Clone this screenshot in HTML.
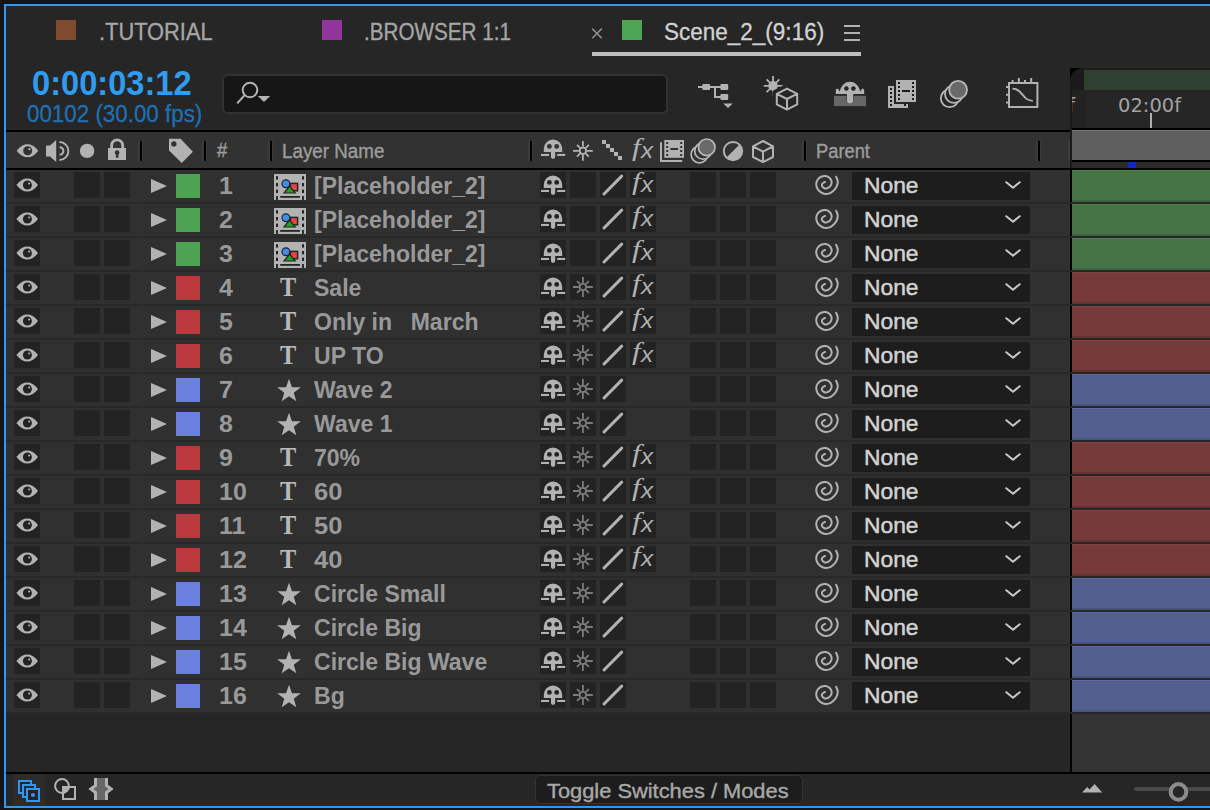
<!DOCTYPE html>
<html lang="en"><head><meta charset="utf-8"><title>Timeline</title>
<style>
*{box-sizing:border-box;margin:0;padding:0}
html,body{width:1210px;height:810px;overflow:hidden;background:#151515}
body{position:relative;font-family:"Liberation Sans",sans-serif;color:#a0a0a0}
.abs{position:absolute}
#panel{position:absolute;left:4px;top:4px;width:1300px;height:804px;border:2px solid #2f97f7;background:#262626}
.t{position:absolute;white-space:nowrap;line-height:1;display:inline-block;transform-origin:0 0}
.tab{font-size:23px;color:#a6a6a6;-webkit-text-stroke:.3px}
.sq{position:absolute;width:20px;height:20px;top:20px}
#hdr{position:absolute;left:6px;top:130px;width:1064px;height:40px;background:#323232;border-top:2px solid #000;border-bottom:2px solid #000}
.vd{position:absolute;top:141px;width:2px;height:20px;background:#000;box-shadow:-2px 0 0 #3b3b3b,1px 0 0 #3b3b3b}
.row{position:absolute;left:6px;width:1064px;height:34px;background:#303030;border-bottom:2px solid #282828}
.row .bx{position:absolute;top:2px;width:26px;height:26px;background:#232323}
.row svg.ic{position:absolute;top:2px;width:26px;height:26px;color:#232323}
.lbl{position:absolute;left:170px;top:4px;width:24px;height:24px}
.tw{position:absolute;left:145px;top:9px;width:0;height:0;border-left:16px solid #b2b2b2;border-top:7px solid transparent;border-bottom:7px solid transparent}
.num{font-weight:bold;font-size:24.5px;letter-spacing:0;left:213px;top:4px;color:#999;transform:scaleX(1.02)}
.nm{font-weight:bold;font-size:24.5px;left:308px;top:4px;color:#999;transform:scaleX(.94)}
.fx{position:absolute;left:624px;top:0;width:30px;height:30px;color:#b2b2b2;line-height:1}
.fx i{position:absolute;white-space:nowrap}
.fx .f{font-family:"Liberation Serif",serif;font-size:26px;left:2px;top:-1px;transform-origin:0 0;transform:scaleX(1.2)}
.fx .x{font-family:"Liberation Sans",sans-serif;font-size:22px;left:11px;top:4px;transform-origin:0 0;transform:scaleX(1.1)}
.ty{left:274px;top:2px;font-family:"Liberation Serif",serif;font-weight:bold;font-size:27px;color:#b8b8b8;transform:scaleX(.9)}
.hl{-webkit-text-stroke:.4px}
.dd{position:absolute;left:846px;top:2px;width:178px;height:28px;background:#1d1d1d}
.none{font-size:22.8px;color:#d2d2d2;left:12px;top:2px;-webkit-text-stroke:.5px #d2d2d2}
.bar{position:absolute;left:1072px;width:140px;height:32px}
.bar.g{background:#467346;box-shadow:inset 0 1px 0 #4f7f50,inset 0 -2px 0 #3b653c}
.bar.r{background:#763a3a;box-shadow:inset 0 1px 0 #82443f,inset 0 -2px 0 #673030}
.bar.b{background:#525e8e;box-shadow:inset 0 1px 0 #5c6a9b,inset 0 -2px 0 #47527e}
</style></head>
<body>

<svg width="0" height="0" style="position:absolute">
<defs>
<symbol id="i-eye" viewBox="0 0 26 26">
  <path d="M2.4 13 C6 8.4 9.6 6.5 13.2 6.5 S20.6 8.4 24 13 C20.6 17.6 16.8 19.5 13.2 19.5 S6 17.6 2.4 13Z" fill="#b2b2b2"/>
  <circle cx="13.4" cy="13" r="4.5" fill="currentColor"/>
  <circle cx="15.2" cy="11.5" r="1.1" fill="#b2b2b2"/>
</symbol>
<symbol id="i-shy" viewBox="0 0 26 26">
  <path d="M3.8 16V12.8A9.2 9.2 0 0 1 22.2 12.8V16H15.2V20.8A2.15 2.15 0 0 1 10.9 20.8V16Z" fill="#b2b2b2"/>
  <circle cx="9.4" cy="10.4" r="2.4" fill="currentColor"/>
  <circle cx="16.7" cy="10.4" r="2.4" fill="currentColor"/>
  <rect x="1" y="17.9" width="8" height="2.1" fill="#b2b2b2"/>
  <rect x="17.2" y="17.9" width="8" height="2.1" fill="#b2b2b2"/>
</symbol>
<symbol id="i-sun" viewBox="0 0 26 26">
  <g stroke="currentColor" stroke-width="1.8" fill="none">
  <circle cx="12.9" cy="13" r="3.2"/>
  <path d="M12.9 3.1V9M12.9 17V22.9M3 13H8.9M16.9 13H22.8M7 7.1L10 10.1M15.8 15.9L18.8 18.9M18.8 7.1L15.8 10.1M10 15.9L7 18.9"/>
  </g>
</symbol>
<symbol id="i-slash" viewBox="0 0 26 26">
  <path d="M4 22L21.7 4.1" stroke="#b2b2b2" stroke-width="3" stroke-linecap="round"/>
</symbol>
<symbol id="i-spiral" viewBox="0 0 30 30">
  <path d="M13.08 11.93 C12.63 12.20 10.92 12.92 10.39 13.56 C9.86 14.20 9.69 15.06 9.91 15.77 C10.14 16.47 11.02 17.34 11.74 17.78 C12.46 18.23 13.29 18.57 14.23 18.46 C15.18 18.34 16.54 17.86 17.40 17.11 C18.26 16.36 19.08 14.98 19.42 13.94 C19.75 12.90 19.75 11.91 19.42 10.87 C19.08 9.83 18.34 8.50 17.40 7.70 C16.46 6.90 15.03 6.26 13.75 6.07 C12.47 5.88 11.00 6.06 9.72 6.55 C8.44 7.05 6.97 7.96 6.07 9.05 C5.18 10.14 4.57 11.74 4.34 13.08 C4.12 14.42 4.28 15.83 4.73 17.11 C5.18 18.39 6.06 19.74 7.03 20.76 C8.01 21.78 9.38 22.73 10.58 23.26 C11.78 23.78 12.87 24.01 14.23 23.93 C15.59 23.85 17.32 23.53 18.74 22.78 C20.17 22.02 21.69 20.73 22.78 19.42 C23.86 18.10 24.79 16.33 25.27 14.90 C25.75 13.48 25.85 12.23 25.66 10.87 C25.46 9.51 24.38 7.43 24.12 6.74" stroke="#b2b2b2" stroke-width="2" fill="none" stroke-linecap="round"/>
</symbol>
<symbol id="i-chev" viewBox="0 0 18 10">
  <path d="M2.3 2.2L9 7.8L15.7 2.2" stroke="#c8c8c8" stroke-width="2" fill="none" stroke-linecap="round" stroke-linejoin="round"/>
</symbol>
<symbol id="i-star" viewBox="0 0 26 26">
  <polygon points="13.00,0.80 15.94,9.15 24.79,9.37 17.76,14.75 20.29,23.23 13.00,18.20 5.71,23.23 8.24,14.75 1.21,9.37 10.06,9.15" fill="#b2b2b2"/>
</symbol>
<symbol id="i-comp" viewBox="0 0 32 26">
  <path d="M0 0H32V26H30V22H28V26H4V22H2V26H0Z" fill="#b2b2b2"/>
  <g fill="#232323">
   <rect x="2" y="2.2" width="2" height="3.4"/><rect x="2" y="9" width="2" height="3.4"/><rect x="2" y="15.6" width="2" height="3.4"/>
   <rect x="28" y="2.2" width="2" height="3.4"/><rect x="28" y="9" width="2" height="3.4"/><rect x="28" y="15.6" width="2" height="3.4"/>
   <rect x="6.2" y="22" width="19.7" height="1.8"/>
  </g>
  <rect x="16.4" y="9.4" width="7.2" height="7.4" fill="#f04040" stroke="#1f2a2a" stroke-width="1.5"/>
  <circle cx="11.9" cy="9.7" r="3.9" fill="#3b8eea" stroke="#232323" stroke-width="1.2"/>
  <path d="M15.6 12.2L10 19H21.2Z" fill="#1fa01f" stroke="#232323" stroke-width="1.2" stroke-linejoin="miter"/>
</symbol>
</defs>
</svg>

<div id="panel"></div>
<div class="sq" style="left:56px;background:#7f4a2e"></div>
<span class="t tab" id="tab1" style="left:98.79px;top:20.8px;font-size:23px;transform:scaleX(0.9492)">.TUTORIAL</span>
<div class="sq" style="left:322px;background:#8f359b"></div>
<span class="t tab" id="tab2" style="left:364.04px;top:20.8px;font-size:23px;transform:scaleX(0.8981)">.BROWSER 1:1</span>
<svg class="abs" style="left:590px;top:26px" width="14" height="14" viewBox="0 0 14 14"><path d="M2.2 2.6L11.8 12.2M11.8 2.6L2.2 12.2" stroke="#909090" stroke-width="1.5"/></svg>
<div class="sq" style="left:622px;background:#4da452"></div>
<span class="t tab" id="tab3" style="left:664.05px;top:20.8px;font-size:23px;color:#d2d2d2;transform:scaleX(0.9785)">Scene_2_(9:16)</span>
<div class="abs" style="left:844px;top:25px;width:16px;height:2px;background:#b2b2b2;box-shadow:0 7px 0 #b2b2b2,0 14px 0 #b2b2b2"></div>
<div class="abs" style="left:592px;top:52px;width:269px;height:4px;background:#bebebe"></div>
<span class="t" id="tc" style="left:32.13px;top:66.0px;font-size:34.5px;font-weight:bold;color:#2f9cf0;transform:scaleX(0.9461)">0:00:03:12</span>
<span class="t" id="tc2" style="left:27.0px;top:102.5px;font-size:23px;color:#1f70b2;-webkit-text-stroke:.3px;transform:scaleX(0.9721)">00102 (30.00 fps)</span>
<div class="abs" style="left:222px;top:74px;width:446px;height:40px;background:#161616;border:2px solid #323232;border-radius:6px"></div>
<svg class="abs" style="left:232px;top:80px" width="42" height="28" viewBox="0 0 42 28"><circle cx="18" cy="10" r="7.3" fill="none" stroke="#b4b4b4" stroke-width="2"/><path d="M12.4 15.4L5.2 23.4" stroke="#b4b4b4" stroke-width="2.1"/><path d="M25.8 16.1H38.2L32 22.1Z" fill="#b4b4b4"/></svg>
<svg class="abs" id="toolbar" style="left:690px;top:70px" width="360" height="44" viewBox="690 70 360 44"><g fill="#b2b2b2"><rect x="698" y="86" width="24" height="2"/><rect x="714" y="86" width="2" height="12"/><rect x="714" y="96" width="8" height="2"/><rect x="702.3" y="84" width="7.8" height="6" rx="1"/><rect x="720.4" y="84" width="7.8" height="6" rx="1"/><rect x="720.4" y="94" width="7.8" height="6" rx="1"/><path d="M723.2 103.4H732.8L728 108Z"/></g><g stroke="#b2b2b2" stroke-width="1.8" fill="none" stroke-linecap="butt"><path d="M773 76V95.5M763.8 85.8H782.8M766.6 79.4L779.4 92.2M779.4 79.4L766.6 92.2"/></g><circle cx="773" cy="85.8" r="4.8" fill="#b2b2b2"/><path d="M787 86.6L799.2 92.6V104.6L787 110.6L774.8 104.6V92.6Z" fill="#262626" stroke="#262626" stroke-width="5" stroke-linejoin="round"/><path d="M787 88.6L797.2 93.8V104.4L787 109.6L776.8 104.4V93.8ZM776.8 93.8L787 99L797.2 93.8M787 99V109.6" fill="none" stroke="#b2b2b2" stroke-width="2" stroke-linejoin="round"/><rect x="834" y="95.8" width="32.1" height="10.3" fill="#676767"/><path d="M835.8 93.9V90.6C835.8 88.3 838.4 88.1 839 90.3L839.7 91.7C841.4 84.8 845.4 81.7 850 81.7C854.6 81.7 858.6 84.8 860.3 91.7L861 90.3C861.6 88.1 864.2 88.3 864.2 90.6V93.9H853.2V100.4A3.15 3.15 0 0 1 846.9 100.4V93.9Z" fill="#b2b2b2" stroke="#262626" stroke-width="1" paint-order="stroke"/><circle cx="846.4" cy="88.5" r="2.3" fill="#262626"/><circle cx="853.4" cy="88.5" r="2.3" fill="#262626"/><path d="M888 86H894V104H908V108H888Z" fill="#b2b2b2"/><rect x="896" y="80" width="20" height="22" fill="#b2b2b2"/><g fill="#1c1c1c"><rect x="898" y="82" width="2" height="2"/><rect x="912" y="82" width="2" height="2"/><rect x="898" y="86" width="2" height="2"/><rect x="912" y="86" width="2" height="2"/><rect x="898" y="90" width="2" height="2"/><rect x="912" y="90" width="2" height="2"/><rect x="898" y="94" width="2" height="2"/><rect x="912" y="94" width="2" height="2"/><rect x="898" y="98" width="2" height="2"/><rect x="912" y="98" width="2" height="2"/><rect x="890" y="88" width="2" height="2"/><rect x="890" y="92" width="2" height="2"/><rect x="890" y="96" width="2" height="2"/><rect x="890" y="100" width="2" height="2"/><rect x="890" y="104" width="2" height="2"/><rect x="904" y="104" width="2" height="2"/><rect x="902" y="90" width="8" height="2"/></g><g stroke="#b8b8b8" stroke-width="1.8"><circle cx="949.7" cy="98.3" r="8.9" fill="#262626"/><circle cx="953.9" cy="94" r="8.9" fill="#262626"/><circle cx="958.1" cy="89.8" r="8.9" fill="#696969"/></g><g stroke="#b2b2b2" stroke-width="2" fill="none"><rect x="1009" y="83" width="28.4" height="24"/><path d="M1012.6 80V83M1018.8 78V83M1025 80V83M1031.2 78V83M1006 87H1009M1006 94.8H1009M1006 102.6H1009"/><path d="M1012.4 88.6C1023 88.6 1022 100.8 1032.8 100.8" stroke-width="1.8"/></g></svg>
<div id="hdr"></div>
<div class="vd" style="left:140px"></div>
<div class="vd" style="left:204px"></div>
<div class="vd" style="left:270px"></div>
<div class="vd" style="left:530px"></div>
<div class="vd" style="left:804px"></div>
<div class="vd" style="left:1038px"></div>
<svg class="abs" id="hicons" style="left:6px;top:132px" width="1064" height="36" viewBox="6 132 1064 36"><svg x="14.3" y="137.7" width="26" height="26" style="color:#323232"><use href="#i-eye"/></svg><path d="M46 145.5H50L56.2 140V162L50 156.5H46Z" fill="#b2b2b2"/><g stroke="#b2b2b2" stroke-width="2" fill="none"><path d="M59.6 147.2A3.8 3.8 0 0 1 59.6 154.8"/><path d="M59.4 142A9 9 0 0 1 59.4 160"/></g><circle cx="87.1" cy="150.9" r="7.2" fill="#b2b2b2"/><rect x="108" y="148" width="18" height="12" fill="#b2b2b2"/><path d="M111.6 148.5V145.4A5.55 5.55 0 0 1 122.7 145.4V148.5" stroke="#b2b2b2" stroke-width="2.8" fill="none"/><circle cx="117.1" cy="152.6" r="2.3" fill="#323232"/><rect x="115.9" y="153" width="2.5" height="4.8" fill="#323232"/><path d="M169 138.8H180.6L192.9 151.8L181.8 163L169 150.6Z" fill="#b2b2b2"/><circle cx="173.9" cy="143.9" r="2.7" fill="#323232"/><svg x="540" y="136" width="26" height="26" style="color:#323232"><use href="#i-shy"/></svg><svg x="570" y="137.8" width="26" height="26" style="color:#b2b2b2"><use href="#i-sun"/></svg><g fill="#b2b2b2"><rect x="602" y="140" width="4" height="4"/><rect x="606" y="144" width="4" height="4"/><rect x="610" y="148" width="4" height="4"/><rect x="614" y="152" width="4" height="4"/><rect x="618" y="156" width="4" height="4"/></g><path d="M661 142.2V161H682.2" stroke="#b2b2b2" stroke-width="2" fill="none"/><rect x="664.3" y="140" width="19.7" height="17.8" fill="#b2b2b2"/><g fill="#323232"><rect x="666.2" y="142" width="2" height="2"/><rect x="680.2" y="142" width="2" height="2"/><rect x="666.2" y="146" width="2" height="2"/><rect x="680.2" y="146" width="2" height="2"/><rect x="666.2" y="150" width="2" height="2"/><rect x="680.2" y="150" width="2" height="2"/><rect x="666.2" y="154" width="2" height="2"/><rect x="680.2" y="154" width="2" height="2"/><rect x="670.4" y="148" width="7.6" height="2"/></g><g stroke="#b8b8b8" stroke-width="1.7"><circle cx="699.4" cy="154.5" r="8.3" fill="#323232"/><circle cx="703" cy="150.9" r="8.3" fill="#323232"/><circle cx="706.7" cy="147.3" r="8.3" fill="#696969"/></g><circle cx="733" cy="151.1" r="9.2" fill="none" stroke="#b2b2b2" stroke-width="2"/><path d="M726.5 157.6A9.2 9.2 0 0 0 739.5 144.6Z" fill="#b2b2b2"/><path d="M763 141L773 146.3V157L763 162.2L753 157V146.3ZM753 146.3L763 151.6L773 146.3M763 151.6V162.2" fill="none" stroke="#b2b2b2" stroke-width="2" stroke-linejoin="round"/></svg>
<span class="fx" style="left:630px;top:136px"><i class="f">f</i><i class="x">x</i></span>
<span class="t hl" id="h-num" style="left:216.92px;top:140.0px;font-size:20px;color:#9c9c9c;transform:scaleX(0.9258)">#</span>
<span class="t hl" id="h-ln" style="left:281.67px;top:141.0px;font-size:20px;color:#9c9c9c;transform:scaleX(0.9397)">Layer Name</span>
<span class="t hl" id="h-par" style="left:816.14px;top:140.6px;font-size:20px;color:#9c9c9c;transform:scaleX(0.9155)">Parent</span>
<div class="row" style="top:170px"><div class="bx" style="left:8px"></div><svg class="ic" style="left:8px"><use href="#i-eye"/></svg><div class="bx" style="left:68px"></div><div class="bx" style="left:98px"></div><div class="tw"></div><div class="lbl" style="background:#4ea352"></div><span class="t num">1</span><svg class="abs" style="left:268px;top:4px" width="32" height="26"><use href="#i-comp"/></svg><span class="t nm">[Placeholder_2]</span><div class="bx" style="left:534px"></div><svg class="ic" style="left:534px"><use href="#i-shy"/></svg><div class="bx" style="left:564px"></div><div class="bx" style="left:594px"></div><svg class="ic" style="left:594px"><use href="#i-slash"/></svg><div class="bx" style="left:624px"></div><span class="fx"><i class="f">f</i><i class="x">x</i></span><div class="bx" style="left:684px"></div><div class="bx" style="left:714px"></div><div class="bx" style="left:744px"></div><svg class="abs" style="left:806px;top:0" width="30" height="30"><use href="#i-spiral"/></svg><div class="dd"><span class="t none">None</span><svg class="abs" style="left:152px;top:8px" width="18" height="10"><use href="#i-chev"/></svg></div></div>
<div class="bar g" style="top:170px"></div><div class="abs" style="left:1070px;top:202px;width:2px;height:2px;background:#272727;z-index:3"></div>
<div class="row" style="top:204px"><div class="bx" style="left:8px"></div><svg class="ic" style="left:8px"><use href="#i-eye"/></svg><div class="bx" style="left:68px"></div><div class="bx" style="left:98px"></div><div class="tw"></div><div class="lbl" style="background:#4ea352"></div><span class="t num">2</span><svg class="abs" style="left:268px;top:4px" width="32" height="26"><use href="#i-comp"/></svg><span class="t nm">[Placeholder_2]</span><div class="bx" style="left:534px"></div><svg class="ic" style="left:534px"><use href="#i-shy"/></svg><div class="bx" style="left:564px"></div><div class="bx" style="left:594px"></div><svg class="ic" style="left:594px"><use href="#i-slash"/></svg><div class="bx" style="left:624px"></div><span class="fx"><i class="f">f</i><i class="x">x</i></span><div class="bx" style="left:684px"></div><div class="bx" style="left:714px"></div><div class="bx" style="left:744px"></div><svg class="abs" style="left:806px;top:0" width="30" height="30"><use href="#i-spiral"/></svg><div class="dd"><span class="t none">None</span><svg class="abs" style="left:152px;top:8px" width="18" height="10"><use href="#i-chev"/></svg></div></div>
<div class="bar g" style="top:204px"></div><div class="abs" style="left:1070px;top:236px;width:2px;height:2px;background:#272727;z-index:3"></div>
<div class="row" style="top:238px"><div class="bx" style="left:8px"></div><svg class="ic" style="left:8px"><use href="#i-eye"/></svg><div class="bx" style="left:68px"></div><div class="bx" style="left:98px"></div><div class="tw"></div><div class="lbl" style="background:#4ea352"></div><span class="t num">3</span><svg class="abs" style="left:268px;top:4px" width="32" height="26"><use href="#i-comp"/></svg><span class="t nm">[Placeholder_2]</span><div class="bx" style="left:534px"></div><svg class="ic" style="left:534px"><use href="#i-shy"/></svg><div class="bx" style="left:564px"></div><div class="bx" style="left:594px"></div><svg class="ic" style="left:594px"><use href="#i-slash"/></svg><div class="bx" style="left:624px"></div><span class="fx"><i class="f">f</i><i class="x">x</i></span><div class="bx" style="left:684px"></div><div class="bx" style="left:714px"></div><div class="bx" style="left:744px"></div><svg class="abs" style="left:806px;top:0" width="30" height="30"><use href="#i-spiral"/></svg><div class="dd"><span class="t none">None</span><svg class="abs" style="left:152px;top:8px" width="18" height="10"><use href="#i-chev"/></svg></div></div>
<div class="bar g" style="top:238px"></div><div class="abs" style="left:1070px;top:270px;width:2px;height:2px;background:#272727;z-index:3"></div>
<div class="row" style="top:272px"><div class="bx" style="left:8px"></div><svg class="ic" style="left:8px"><use href="#i-eye"/></svg><div class="bx" style="left:68px"></div><div class="bx" style="left:98px"></div><div class="tw"></div><div class="lbl" style="background:#b9393d"></div><span class="t num">4</span><span class="t ty">T</span><span class="t nm">Sale</span><div class="bx" style="left:534px"></div><svg class="ic" style="left:534px"><use href="#i-shy"/></svg><div class="bx" style="left:564px"></div><svg class="ic" style="left:564px;color:#7c7c7c"><use href="#i-sun"/></svg><div class="bx" style="left:594px"></div><svg class="ic" style="left:594px"><use href="#i-slash"/></svg><div class="bx" style="left:624px"></div><span class="fx"><i class="f">f</i><i class="x">x</i></span><div class="bx" style="left:684px"></div><div class="bx" style="left:714px"></div><div class="bx" style="left:744px"></div><svg class="abs" style="left:806px;top:0" width="30" height="30"><use href="#i-spiral"/></svg><div class="dd"><span class="t none">None</span><svg class="abs" style="left:152px;top:8px" width="18" height="10"><use href="#i-chev"/></svg></div></div>
<div class="bar r" style="top:272px"></div><div class="abs" style="left:1070px;top:304px;width:2px;height:2px;background:#272727;z-index:3"></div>
<div class="row" style="top:306px"><div class="bx" style="left:8px"></div><svg class="ic" style="left:8px"><use href="#i-eye"/></svg><div class="bx" style="left:68px"></div><div class="bx" style="left:98px"></div><div class="tw"></div><div class="lbl" style="background:#b9393d"></div><span class="t num">5</span><span class="t ty">T</span><span class="t nm">Only in <span style="margin-left:13px">March</span></span><div class="bx" style="left:534px"></div><svg class="ic" style="left:534px"><use href="#i-shy"/></svg><div class="bx" style="left:564px"></div><svg class="ic" style="left:564px;color:#7c7c7c"><use href="#i-sun"/></svg><div class="bx" style="left:594px"></div><svg class="ic" style="left:594px"><use href="#i-slash"/></svg><div class="bx" style="left:624px"></div><span class="fx"><i class="f">f</i><i class="x">x</i></span><div class="bx" style="left:684px"></div><div class="bx" style="left:714px"></div><div class="bx" style="left:744px"></div><svg class="abs" style="left:806px;top:0" width="30" height="30"><use href="#i-spiral"/></svg><div class="dd"><span class="t none">None</span><svg class="abs" style="left:152px;top:8px" width="18" height="10"><use href="#i-chev"/></svg></div></div>
<div class="bar r" style="top:306px"></div><div class="abs" style="left:1070px;top:338px;width:2px;height:2px;background:#272727;z-index:3"></div>
<div class="row" style="top:340px"><div class="bx" style="left:8px"></div><svg class="ic" style="left:8px"><use href="#i-eye"/></svg><div class="bx" style="left:68px"></div><div class="bx" style="left:98px"></div><div class="tw"></div><div class="lbl" style="background:#b9393d"></div><span class="t num">6</span><span class="t ty">T</span><span class="t nm">UP TO</span><div class="bx" style="left:534px"></div><svg class="ic" style="left:534px"><use href="#i-shy"/></svg><div class="bx" style="left:564px"></div><svg class="ic" style="left:564px;color:#7c7c7c"><use href="#i-sun"/></svg><div class="bx" style="left:594px"></div><svg class="ic" style="left:594px"><use href="#i-slash"/></svg><div class="bx" style="left:624px"></div><span class="fx"><i class="f">f</i><i class="x">x</i></span><div class="bx" style="left:684px"></div><div class="bx" style="left:714px"></div><div class="bx" style="left:744px"></div><svg class="abs" style="left:806px;top:0" width="30" height="30"><use href="#i-spiral"/></svg><div class="dd"><span class="t none">None</span><svg class="abs" style="left:152px;top:8px" width="18" height="10"><use href="#i-chev"/></svg></div></div>
<div class="bar r" style="top:340px"></div><div class="abs" style="left:1070px;top:372px;width:2px;height:2px;background:#272727;z-index:3"></div>
<div class="row" style="top:374px"><div class="bx" style="left:8px"></div><svg class="ic" style="left:8px"><use href="#i-eye"/></svg><div class="bx" style="left:68px"></div><div class="bx" style="left:98px"></div><div class="tw"></div><div class="lbl" style="background:#6b7fde"></div><span class="t num">7</span><svg class="ic" style="left:270px;top:4px"><use href="#i-star"/></svg><span class="t nm">Wave 2</span><div class="bx" style="left:534px"></div><svg class="ic" style="left:534px"><use href="#i-shy"/></svg><div class="bx" style="left:564px"></div><svg class="ic" style="left:564px;color:#7c7c7c"><use href="#i-sun"/></svg><div class="bx" style="left:594px"></div><svg class="ic" style="left:594px"><use href="#i-slash"/></svg><div class="bx" style="left:684px"></div><div class="bx" style="left:714px"></div><div class="bx" style="left:744px"></div><svg class="abs" style="left:806px;top:0" width="30" height="30"><use href="#i-spiral"/></svg><div class="dd"><span class="t none">None</span><svg class="abs" style="left:152px;top:8px" width="18" height="10"><use href="#i-chev"/></svg></div></div>
<div class="bar b" style="top:374px"></div><div class="abs" style="left:1070px;top:406px;width:2px;height:2px;background:#272727;z-index:3"></div>
<div class="row" style="top:408px"><div class="bx" style="left:8px"></div><svg class="ic" style="left:8px"><use href="#i-eye"/></svg><div class="bx" style="left:68px"></div><div class="bx" style="left:98px"></div><div class="tw"></div><div class="lbl" style="background:#6b7fde"></div><span class="t num">8</span><svg class="ic" style="left:270px;top:4px"><use href="#i-star"/></svg><span class="t nm">Wave 1</span><div class="bx" style="left:534px"></div><svg class="ic" style="left:534px"><use href="#i-shy"/></svg><div class="bx" style="left:564px"></div><svg class="ic" style="left:564px;color:#7c7c7c"><use href="#i-sun"/></svg><div class="bx" style="left:594px"></div><svg class="ic" style="left:594px"><use href="#i-slash"/></svg><div class="bx" style="left:684px"></div><div class="bx" style="left:714px"></div><div class="bx" style="left:744px"></div><svg class="abs" style="left:806px;top:0" width="30" height="30"><use href="#i-spiral"/></svg><div class="dd"><span class="t none">None</span><svg class="abs" style="left:152px;top:8px" width="18" height="10"><use href="#i-chev"/></svg></div></div>
<div class="bar b" style="top:408px"></div><div class="abs" style="left:1070px;top:440px;width:2px;height:2px;background:#272727;z-index:3"></div>
<div class="row" style="top:442px"><div class="bx" style="left:8px"></div><svg class="ic" style="left:8px"><use href="#i-eye"/></svg><div class="bx" style="left:68px"></div><div class="bx" style="left:98px"></div><div class="tw"></div><div class="lbl" style="background:#b9393d"></div><span class="t num">9</span><span class="t ty">T</span><span class="t nm">70%</span><div class="bx" style="left:534px"></div><svg class="ic" style="left:534px"><use href="#i-shy"/></svg><div class="bx" style="left:564px"></div><svg class="ic" style="left:564px;color:#7c7c7c"><use href="#i-sun"/></svg><div class="bx" style="left:594px"></div><svg class="ic" style="left:594px"><use href="#i-slash"/></svg><div class="bx" style="left:624px"></div><span class="fx"><i class="f">f</i><i class="x">x</i></span><div class="bx" style="left:684px"></div><div class="bx" style="left:714px"></div><div class="bx" style="left:744px"></div><svg class="abs" style="left:806px;top:0" width="30" height="30"><use href="#i-spiral"/></svg><div class="dd"><span class="t none">None</span><svg class="abs" style="left:152px;top:8px" width="18" height="10"><use href="#i-chev"/></svg></div></div>
<div class="bar r" style="top:442px"></div><div class="abs" style="left:1070px;top:474px;width:2px;height:2px;background:#272727;z-index:3"></div>
<div class="row" style="top:476px"><div class="bx" style="left:8px"></div><svg class="ic" style="left:8px"><use href="#i-eye"/></svg><div class="bx" style="left:68px"></div><div class="bx" style="left:98px"></div><div class="tw"></div><div class="lbl" style="background:#b9393d"></div><span class="t num">10</span><span class="t ty">T</span><span class="t nm"><span style="display:inline-block;transform:scaleX(1.11);transform-origin:0 0">60</span></span><div class="bx" style="left:534px"></div><svg class="ic" style="left:534px"><use href="#i-shy"/></svg><div class="bx" style="left:564px"></div><svg class="ic" style="left:564px;color:#7c7c7c"><use href="#i-sun"/></svg><div class="bx" style="left:594px"></div><svg class="ic" style="left:594px"><use href="#i-slash"/></svg><div class="bx" style="left:624px"></div><span class="fx"><i class="f">f</i><i class="x">x</i></span><div class="bx" style="left:684px"></div><div class="bx" style="left:714px"></div><div class="bx" style="left:744px"></div><svg class="abs" style="left:806px;top:0" width="30" height="30"><use href="#i-spiral"/></svg><div class="dd"><span class="t none">None</span><svg class="abs" style="left:152px;top:8px" width="18" height="10"><use href="#i-chev"/></svg></div></div>
<div class="bar r" style="top:476px"></div><div class="abs" style="left:1070px;top:508px;width:2px;height:2px;background:#272727;z-index:3"></div>
<div class="row" style="top:510px"><div class="bx" style="left:8px"></div><svg class="ic" style="left:8px"><use href="#i-eye"/></svg><div class="bx" style="left:68px"></div><div class="bx" style="left:98px"></div><div class="tw"></div><div class="lbl" style="background:#b9393d"></div><span class="t num">11</span><span class="t ty">T</span><span class="t nm"><span style="display:inline-block;transform:scaleX(1.11);transform-origin:0 0">50</span></span><div class="bx" style="left:534px"></div><svg class="ic" style="left:534px"><use href="#i-shy"/></svg><div class="bx" style="left:564px"></div><svg class="ic" style="left:564px;color:#7c7c7c"><use href="#i-sun"/></svg><div class="bx" style="left:594px"></div><svg class="ic" style="left:594px"><use href="#i-slash"/></svg><div class="bx" style="left:624px"></div><span class="fx"><i class="f">f</i><i class="x">x</i></span><div class="bx" style="left:684px"></div><div class="bx" style="left:714px"></div><div class="bx" style="left:744px"></div><svg class="abs" style="left:806px;top:0" width="30" height="30"><use href="#i-spiral"/></svg><div class="dd"><span class="t none">None</span><svg class="abs" style="left:152px;top:8px" width="18" height="10"><use href="#i-chev"/></svg></div></div>
<div class="bar r" style="top:510px"></div><div class="abs" style="left:1070px;top:542px;width:2px;height:2px;background:#272727;z-index:3"></div>
<div class="row" style="top:544px"><div class="bx" style="left:8px"></div><svg class="ic" style="left:8px"><use href="#i-eye"/></svg><div class="bx" style="left:68px"></div><div class="bx" style="left:98px"></div><div class="tw"></div><div class="lbl" style="background:#b9393d"></div><span class="t num">12</span><span class="t ty">T</span><span class="t nm"><span style="display:inline-block;transform:scaleX(1.11);transform-origin:0 0">40</span></span><div class="bx" style="left:534px"></div><svg class="ic" style="left:534px"><use href="#i-shy"/></svg><div class="bx" style="left:564px"></div><svg class="ic" style="left:564px;color:#7c7c7c"><use href="#i-sun"/></svg><div class="bx" style="left:594px"></div><svg class="ic" style="left:594px"><use href="#i-slash"/></svg><div class="bx" style="left:624px"></div><span class="fx"><i class="f">f</i><i class="x">x</i></span><div class="bx" style="left:684px"></div><div class="bx" style="left:714px"></div><div class="bx" style="left:744px"></div><svg class="abs" style="left:806px;top:0" width="30" height="30"><use href="#i-spiral"/></svg><div class="dd"><span class="t none">None</span><svg class="abs" style="left:152px;top:8px" width="18" height="10"><use href="#i-chev"/></svg></div></div>
<div class="bar r" style="top:544px"></div><div class="abs" style="left:1070px;top:576px;width:2px;height:2px;background:#272727;z-index:3"></div>
<div class="row" style="top:578px"><div class="bx" style="left:8px"></div><svg class="ic" style="left:8px"><use href="#i-eye"/></svg><div class="bx" style="left:68px"></div><div class="bx" style="left:98px"></div><div class="tw"></div><div class="lbl" style="background:#6b7fde"></div><span class="t num">13</span><svg class="ic" style="left:270px;top:4px"><use href="#i-star"/></svg><span class="t nm">Circle Small</span><div class="bx" style="left:534px"></div><svg class="ic" style="left:534px"><use href="#i-shy"/></svg><div class="bx" style="left:564px"></div><svg class="ic" style="left:564px;color:#7c7c7c"><use href="#i-sun"/></svg><div class="bx" style="left:594px"></div><svg class="ic" style="left:594px"><use href="#i-slash"/></svg><div class="bx" style="left:684px"></div><div class="bx" style="left:714px"></div><div class="bx" style="left:744px"></div><svg class="abs" style="left:806px;top:0" width="30" height="30"><use href="#i-spiral"/></svg><div class="dd"><span class="t none">None</span><svg class="abs" style="left:152px;top:8px" width="18" height="10"><use href="#i-chev"/></svg></div></div>
<div class="bar b" style="top:578px"></div><div class="abs" style="left:1070px;top:610px;width:2px;height:2px;background:#272727;z-index:3"></div>
<div class="row" style="top:612px"><div class="bx" style="left:8px"></div><svg class="ic" style="left:8px"><use href="#i-eye"/></svg><div class="bx" style="left:68px"></div><div class="bx" style="left:98px"></div><div class="tw"></div><div class="lbl" style="background:#6b7fde"></div><span class="t num">14</span><svg class="ic" style="left:270px;top:4px"><use href="#i-star"/></svg><span class="t nm">Circle Big</span><div class="bx" style="left:534px"></div><svg class="ic" style="left:534px"><use href="#i-shy"/></svg><div class="bx" style="left:564px"></div><svg class="ic" style="left:564px;color:#7c7c7c"><use href="#i-sun"/></svg><div class="bx" style="left:594px"></div><svg class="ic" style="left:594px"><use href="#i-slash"/></svg><div class="bx" style="left:684px"></div><div class="bx" style="left:714px"></div><div class="bx" style="left:744px"></div><svg class="abs" style="left:806px;top:0" width="30" height="30"><use href="#i-spiral"/></svg><div class="dd"><span class="t none">None</span><svg class="abs" style="left:152px;top:8px" width="18" height="10"><use href="#i-chev"/></svg></div></div>
<div class="bar b" style="top:612px"></div><div class="abs" style="left:1070px;top:644px;width:2px;height:2px;background:#272727;z-index:3"></div>
<div class="row" style="top:646px"><div class="bx" style="left:8px"></div><svg class="ic" style="left:8px"><use href="#i-eye"/></svg><div class="bx" style="left:68px"></div><div class="bx" style="left:98px"></div><div class="tw"></div><div class="lbl" style="background:#6b7fde"></div><span class="t num">15</span><svg class="ic" style="left:270px;top:4px"><use href="#i-star"/></svg><span class="t nm">Circle Big Wave</span><div class="bx" style="left:534px"></div><svg class="ic" style="left:534px"><use href="#i-shy"/></svg><div class="bx" style="left:564px"></div><svg class="ic" style="left:564px;color:#7c7c7c"><use href="#i-sun"/></svg><div class="bx" style="left:594px"></div><svg class="ic" style="left:594px"><use href="#i-slash"/></svg><div class="bx" style="left:684px"></div><div class="bx" style="left:714px"></div><div class="bx" style="left:744px"></div><svg class="abs" style="left:806px;top:0" width="30" height="30"><use href="#i-spiral"/></svg><div class="dd"><span class="t none">None</span><svg class="abs" style="left:152px;top:8px" width="18" height="10"><use href="#i-chev"/></svg></div></div>
<div class="bar b" style="top:646px"></div><div class="abs" style="left:1070px;top:678px;width:2px;height:2px;background:#272727;z-index:3"></div>
<div class="row" style="top:680px"><div class="bx" style="left:8px"></div><svg class="ic" style="left:8px"><use href="#i-eye"/></svg><div class="bx" style="left:68px"></div><div class="bx" style="left:98px"></div><div class="tw"></div><div class="lbl" style="background:#6b7fde"></div><span class="t num">16</span><svg class="ic" style="left:270px;top:4px"><use href="#i-star"/></svg><span class="t nm">Bg</span><div class="bx" style="left:534px"></div><svg class="ic" style="left:534px"><use href="#i-shy"/></svg><div class="bx" style="left:564px"></div><svg class="ic" style="left:564px;color:#7c7c7c"><use href="#i-sun"/></svg><div class="bx" style="left:594px"></div><svg class="ic" style="left:594px"><use href="#i-slash"/></svg><div class="bx" style="left:684px"></div><div class="bx" style="left:714px"></div><div class="bx" style="left:744px"></div><svg class="abs" style="left:806px;top:0" width="30" height="30"><use href="#i-spiral"/></svg><div class="dd"><span class="t none">None</span><svg class="abs" style="left:152px;top:8px" width="18" height="10"><use href="#i-chev"/></svg></div></div>
<div class="bar b" style="top:680px"></div><div class="abs" style="left:1070px;top:712px;width:2px;height:2px;background:#272727;z-index:3"></div>
<div class="abs" style="left:1070px;top:68px;width:2px;height:100px;background:#1b1b1b"></div><div class="abs" style="left:1070px;top:168px;width:2px;height:606px;background:#000"></div><div class="abs" style="left:141px;top:170px;width:2px;height:542px;background:#303030"></div><div class="abs" style="left:1068px;top:141px;width:2px;height:20px;background:#3c3c3c"></div><div class="abs" id="ruler" style="left:1072px;top:68px;width:140px;height:60px;background:#262626;overflow:hidden"><div class="abs" style="left:0;top:0;width:140px;height:2px;background:#1c1c1c"></div><div class="abs" style="left:0;top:22px;width:14px;height:38px;background:#222"></div><div class="abs" style="left:12px;top:2px;width:130px;height:20px;background:#2f3f30"></div><span class="t" id="rul" style="left:46px;top:26.5px;transform:scaleX(.975);font-family:'DejaVu Sans',sans-serif;font-size:20px;color:#a2a2a2">02:00f</span><span class="t" style="left:-4px;top:26.5px;font-family:'DejaVu Sans',sans-serif;font-size:20px;color:#a2a2a2">f</span><div class="abs" style="left:78px;top:45px;width:2px;height:15px;background:#b0b0b0"></div></div><div class="abs" style="left:1070px;top:68px;width:14px;height:22px;background:#000"><div style="width:14px;height:22px;background:#1a1a1a;border-top-left-radius:14px 12px"></div></div><div class="abs" style="left:1072px;top:128px;width:140px;height:2px;background:#000"></div><div class="abs" style="left:1072px;top:130px;width:140px;height:30px;background:#5f5f5f;box-shadow:inset 0 1px 0 #7a7a7a"></div><div class="abs" style="left:1072px;top:160px;width:140px;height:2px;background:#000"></div><div class="abs" style="left:1072px;top:162px;width:140px;height:6px;background:#2a2a2a"></div><div class="abs" style="left:1128px;top:162px;width:8px;height:6px;background:#1226c8"></div><div class="abs" style="left:1072px;top:168px;width:140px;height:2px;background:#000"></div><div class="abs" style="left:1072px;top:714px;width:140px;height:58px;background:#343434"></div>
<div class="abs" style="left:6px;top:772px;width:1210px;height:2px;background:#000"></div><div class="abs" style="left:12px;top:774px;width:34px;height:32px;background:#2c2c2c;border:2px solid #2a2a2a;border-top:0;border-bottom:0"></div><svg class="abs" id="bicons" style="left:6px;top:774px" width="120" height="32" viewBox="6 774 120 32"><g stroke="#2f97f7" stroke-width="2" fill="#262626"><rect x="19" y="781" width="12" height="12"/><rect x="23" y="785" width="12" height="12" fill="#2b2b2b"/><rect x="27" y="789" width="12" height="12" fill="#242424"/></g><circle cx="33" cy="795" r="2.1" fill="#2f97f7"/><path d="M62 786H69.9A7.9 7.9 0 0 1 62 793.9Z" fill="#b2b2b2"/><circle cx="62" cy="786" r="6.9" fill="none" stroke="#b2b2b2" stroke-width="2"/><rect x="63" y="787" width="12" height="12" fill="none" stroke="#b2b2b2" stroke-width="2"/><path d="M95.5 778H106.5V785.4L112 789L106.5 792.6V800H95.5V792.6L90 789L95.5 785.4Z" fill="#676767"/><path d="M95.5 778V785.4L90.8 789L95.5 792.6V800M106.5 778V785.4L111.2 789L106.5 792.6V800" fill="none" stroke="#b2b2b2" stroke-width="3"/></svg><div class="abs" style="left:535px;top:775px;width:268px;height:29px;background:#1d1d1d;border:1px solid #343434;border-radius:5px"></div><span class="t" id="tog" style="left:547.3px;top:779.5px;font-size:21px;color:#a8a8a8;-webkit-text-stroke:.4px;transform:scaleX(1.04)">Toggle Switches / Modes</span><svg class="abs" style="left:1080px;top:776px" width="130" height="30" viewBox="1080 776 130 30"><path d="M1082 792.4L1087.2 787L1089.6 789.4L1094.6 784L1102.2 792.4Z" fill="#b2b2b2"/><rect x="1134" y="787" width="90" height="4" rx="2" fill="#4a4a4a"/><circle cx="1178.5" cy="791.9" r="7.8" fill="#262626" stroke="#8c8c8c" stroke-width="4"/></svg>
</body></html>
